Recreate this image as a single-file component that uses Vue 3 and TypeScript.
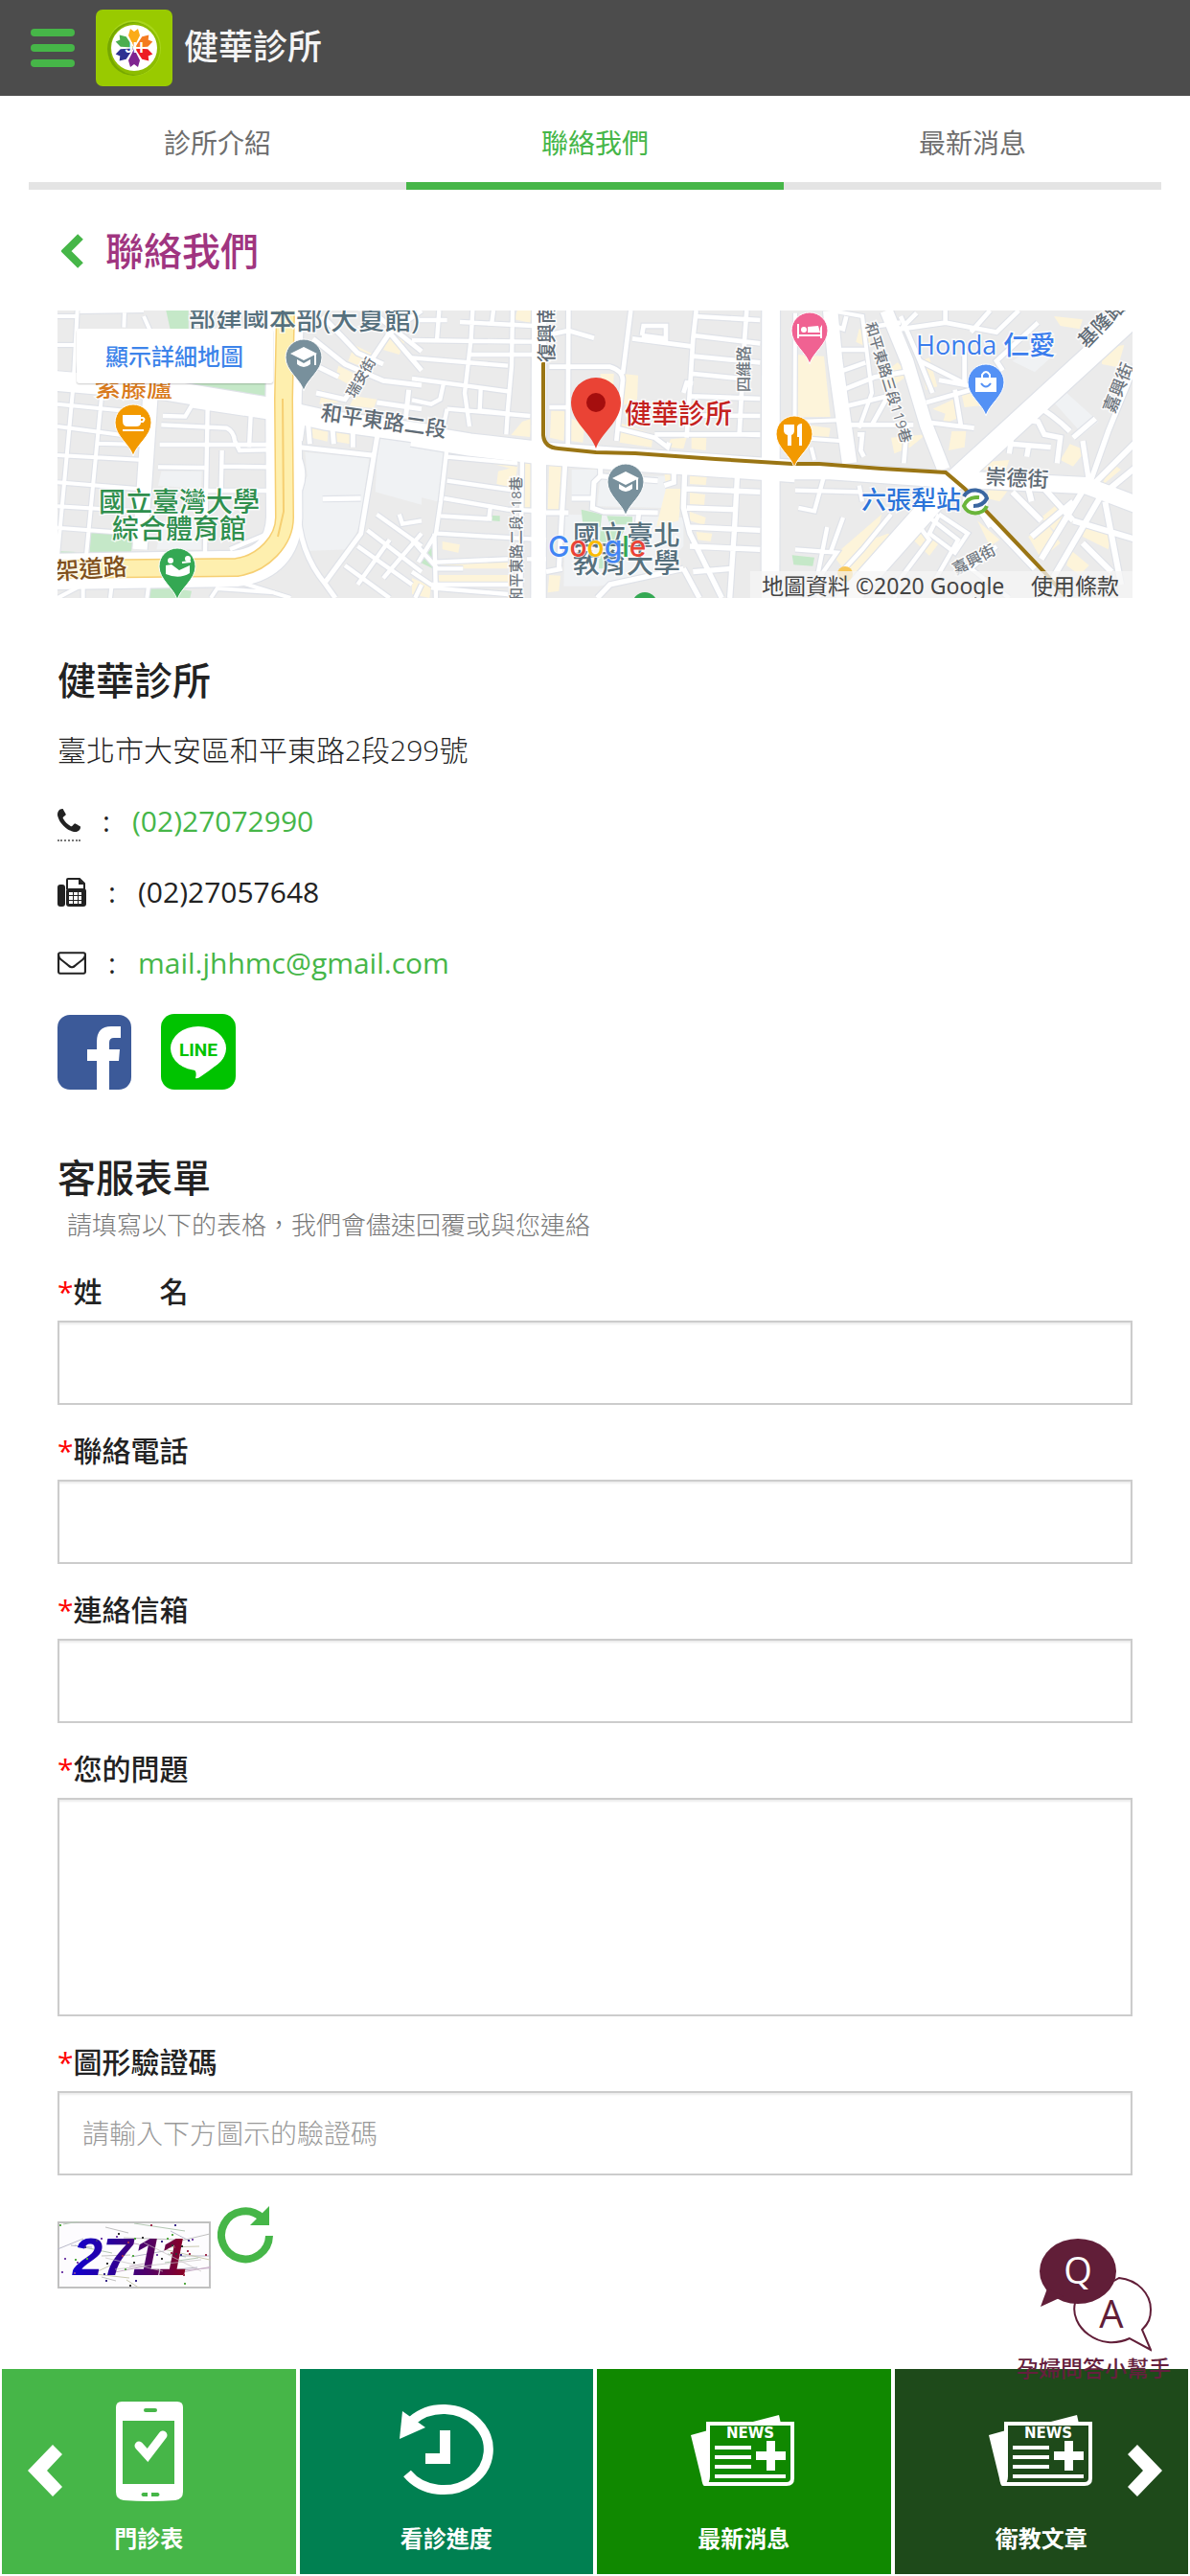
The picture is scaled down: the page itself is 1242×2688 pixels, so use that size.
<script setup lang="ts">
import { ref } from 'vue'

interface Road { d: string; w: number }
interface District { dx: number; roads: Road[]; cream: string[]; park: string[]; campus: string[] }
interface Pin { x: number; y: number; fill: string; kind: string }

const tabs = [
  { label: '診所介紹', active: false },
  { label: '聯絡我們', active: true },
  { label: '最新消息', active: false },
]

const tiles = [
  { label: '門診表', icon: 'phone', tone: 'light' },
  { label: '看診進度', icon: 'clock', tone: 'teal' },
  { label: '最新消息', icon: 'news', tone: 'green' },
  { label: '衛教文章', icon: 'news', tone: 'dark' },
]

const fields = ref([
  { id: 'name', label: '姓　　名', type: 'text', value: '' },
  { id: 'phone', label: '聯絡電話', type: 'tel', value: '' },
  { id: 'email', label: '連絡信箱', type: 'email', value: '' },
])
const question = ref('')
const captcha = ref('')

const petals = ['#fbab18', '#f47b20', '#ed1c24', '#7f2490', '#2e3192', '#4bae4f']

// Street network, three districts west to east; units are a third of a map pixel.
const districts: District[] = [
  {
    dx: -20,
    roads: [
      { d: 'M0 258L400 292L720 345L900 385L1240 432', w: 62 },
      { d: 'M352 290L318 790', w: 46 },
      { d: 'M0 860L620 850Q765 830 770 690L768 330L775 0', w: 112 },
      { d: 'M122 42L110 270L60 810M200 290L150 810M60 335L330 362M60 405L325 440M60 495L330 510M180 458L330 462M60 580L310 600M60 655L310 670M60 722L300 740', w: 12 },
      { d: 'M60 60L120 60M60 150L118 150M270 42L268 95M130 45L330 42M330 60L350 105', w: 12 },
      { d: 'M530 345L522 800M390 372L460 374L480 340L720 376M385 400L590 410Q612 420 615 450L630 480L716 478M380 462L716 462M375 532L520 534M665 370L660 470M575 480L572 600M575 530L716 532M530 606L716 606M600 790L720 740', w: 13 },
      { d: 'M820 470L1050 496M1062 430L1010 740L900 890M890 632L1010 630M815 500Q840 560 815 610Q800 780 900 900L930 942', w: 15 },
      { d: 'M860 130L960 210L1080 262L1200 276M890 60L1000 175L1080 210M1040 42L1200 170M1200 42L1100 112L960 320L870 300M1100 112L1200 230M870 215L940 250M1160 290L1150 380M830 380L820 450M845 400L850 460M920 400L925 460M985 400L985 470M1200 350L1060 330', w: 15 },
      { d: 'M1060 680L1200 780M1030 730L1200 860M1000 780L1170 900M960 840L1100 942M1200 740L1080 880M1130 680L1140 710L1200 700M1100 760L1000 900M1200 900L1180 942', w: 13 },
      { d: 'M60 905L340 890M60 942L140 900M140 900L140 942M230 900L225 942M345 905L340 942M490 900L640 895L790 942M540 942L560 912L740 925', w: 12 },
    ],
    cream: ['M990 150L1050 180L1030 225L970 200Z', 'M940 215L1010 250L1000 290L930 250Z', 'M1100 120L1150 130L1130 180L1080 165Z', 'M990 310L1060 320L1050 348L975 340Z', 'M850 402L908 408L905 452L855 440Z', 'M930 412L982 418L975 460L930 452Z', 'M820 395L835 400L832 438L820 436Z', 'M890 290L940 330L880 335Z'],
    park: ['M400 42L470 42L470 100L415 110Z', 'M430 260L715 270L712 320L560 290Z', 'M165 728L300 745L290 802L160 800Z', 'M340 900L480 920L475 942L345 942Z', 'M60 795L120 798L60 815Z'],
    campus: ['M835 485L1036 505L1005 715L975 790L835 795L815 610L842 560Z', 'M1065 435L1200 450L1200 650L1055 610Z', 'M385 545L512 545L510 600L375 590Z', 'M390 700L510 705L510 790L370 790Z'],
  },
  {
    dx: 370,
    roads: [
      { d: 'M0 432L180 462L420 490L700 510L960 528L1200 545', w: 70 },
      { d: 'M398 0L396 960', w: 46 },
      { d: 'M1124 0L1122 960', w: 56 },
      { d: 'M0 135L380 140M190 42L185 130L165 300L180 405M85 42L78 135M0 190L300 215M0 255L300 295M0 322L60 335L88 320L100 265M185 180L380 180M315 42L312 215L300 350L295 430M20 72L110 72M150 78L380 90M255 42L250 80M215 290L212 355L300 365M110 350L370 372M110 350L95 420', w: 13 },
      { d: 'M430 118L490 105L570 128M490 42L488 470M430 218L620 218Q660 230 660 260L640 450M430 345L490 345M685 42L660 240M690 130L880 155M720 120L725 90L795 90L795 130L720 120', w: 14 },
      { d: 'M890 42L880 130L870 290L860 440M885 60L1090 72M880 120L1090 145M880 185L1090 205M880 240L1030 255M870 310L1090 318M870 370L1090 372M760 430L1090 430M1048 42L1040 150L1025 430L1090 432M850 300L860 268L880 270M640 410L760 440L800 470L805 455', w: 14 },
      { d: 'M112 450L90 640L75 740L20 830M110 500L330 520M110 575L320 605M100 630L300 665L420 670M90 685L250 695M80 740L420 760M0 760L80 850L160 850M70 740L75 942M0 860L60 900L300 900M75 830L300 820M60 910L300 930M345 480L340 942M360 820L420 820M245 660L240 700', w: 13 },
      { d: 'M480 510L470 670L460 850M420 675L490 675M420 860L470 850M590 500L590 560L570 580L565 660L600 672L770 675M500 630L565 630M590 560L700 570L770 575M710 675L700 770M820 540L820 580L790 590', w: 15 },
      { d: 'M855 520L850 660L870 740L970 942M1020 530L1010 720L995 942M860 600L1090 610M860 660L1010 665M870 720L1090 730M870 780L1090 790M880 860L1000 850M580 942L620 900L850 850M850 850L900 942', w: 16 },
    ],
    cream: ['M330 42L378 42L370 80L320 70Z', 'M436 355L480 358L475 450L432 440Z', 'M590 240L632 240L630 300L590 270Z', 'M660 240L708 245L705 320L660 340Z', 'M500 380L540 400L535 455L495 450Z', 'M655 395L755 430L750 470L650 455Z', 'M875 437L922 440L920 480L875 475Z', 'M345 390L375 380L370 438L310 432Z', 'M230 485L330 500L320 540L230 515Z', 'M270 545L330 530L320 600L265 585Z', 'M430 512L470 515L460 665L425 670Z', 'M345 500L375 502L370 670L348 665Z', 'M95 765L150 775L145 800L95 790Z', 'M90 830L300 825L300 850L90 850Z', 'M80 870L320 870L320 905L90 905Z', 'M430 870L465 872L460 920L425 925Z', 'M870 540L925 545L920 588L870 585Z', 'M870 612L918 618L915 652L870 648Z', 'M870 672L920 690L915 715L870 700Z', 'M890 735L940 740L935 765L895 760Z', 'M745 530L815 535L810 580L795 590L790 550Z', 'M795 600L845 600L835 700L765 720Z', 'M0 880L60 905L55 942L0 930Z', 'M500 515L580 520L575 540L500 530Z', 'M810 445L860 440L850 475L800 470Z'],
    park: ['M530 665L595 680L590 720L535 710Z', 'M610 685L690 688L690 712L620 712Z', 'M25 830L65 780L65 850Z', 'M245 683L275 685L275 702L248 700Z', 'M590 720L670 720L600 850L585 850Z'],
    campus: ['M0 450L100 470L80 640L0 620Z', 'M500 540L585 540L570 640L500 640Z', 'M590 560L795 560L795 660L580 655Z', 'M480 680L850 690L850 780L760 880L580 905L475 905Z'],
  },
  {
    dx: 740,
    roads: [
      { d: 'M0 545L200 545L560 570L700 575L1000 590L1160 650', w: 52 },
      { d: 'M240 960L560 600L1160 50', w: 66 },
      { d: 'M200 42L215 200L260 520', w: 46 },
      { d: 'M375 42L440 200L500 400L555 540', w: 40 },
      { d: 'M90 50L88 500M90 390L230 385M90 440L230 450M140 470L150 510M200 42L300 60L330 300L290 410', w: 12 },
      { d: 'M210 90L240 100L250 60M210 165L310 165M225 235L310 205M240 290L340 250L460 230M235 345L380 310M260 400L460 400M285 430L300 430L295 480L305 500M440 400L430 520M380 310L330 400M350 90L420 80', w: 14 },
      { d: 'M420 60L480 200M480 200L620 270L620 160M470 50L420 100L560 80L560 42M560 80L720 110L790 42M640 110L700 42M500 330L640 290M490 390L570 400L650 410M590 290L610 410M520 300L480 200M850 80L720 200L740 230M540 260L650 280', w: 14 },
      { d: 'M830 330Q900 370 950 420M780 380L850 390L870 430L920 440L910 520M770 420L760 490M770 460L890 470M820 470L815 500M960 440L1030 380M1020 210L1030 170L1000 160M1010 580L990 450M1160 200L1070 420L1010 590', w: 16 },
      { d: 'M1000 590L860 820M1060 600L850 960M1160 450L1020 590M1160 530L1050 620M960 700L1160 760M990 770L1080 860M1060 640L1110 900M960 640L830 750M870 600L960 700M770 610L860 700M640 640L840 850M820 600L830 640', w: 18 },
      { d: 'M90 605L290 610M90 790L220 800L150 900M180 560L150 670L100 660M190 720L160 870L300 942M290 590L300 640M240 690L200 800M390 680L300 790L160 942M450 680L510 760L420 880L400 942M510 690L600 760L520 900M540 680L630 740L590 800L510 740L540 680M720 780L640 850L760 942M650 640L700 720', w: 13 },
    ],
    cream: ['M92 180L180 185L200 375L90 375Z', 'M140 402L200 410L195 440L130 435Z', 'M290 100L330 110L320 160L280 140Z', 'M350 250L410 205L450 240L380 290Z', 'M480 200L510 190L535 280L500 290Z', 'M520 350L585 320L595 380L550 400L560 365Z', 'M610 300L660 290L670 340L620 345Z', 'M580 420L625 420L620 470L570 480Z', 'M640 520L760 510L750 540L640 540Z', 'M900 60L990 70L980 100L920 90Z', 'M1050 160L1120 150L1100 220L1050 210Z', 'M1080 520L1110 540L1050 590Z', 'M950 460L1000 480L960 530L920 510Z', 'M380 740L440 760L250 880L220 800Z', 'M460 700L540 770L510 810L440 740Z', 'M660 700L730 760L700 780Z', 'M820 750L880 710L920 770L860 820Z', 'M860 690L920 640L960 680L910 740Z', 'M1000 710L1080 740L1070 790L990 750Z', 'M950 790L1010 840L980 870L940 840Z', 'M700 580L760 600L730 640L690 630Z', 'M390 440L500 430L450 470L400 490Z', 'M340 780L240 850L210 810L360 680Z'],
    park: ['M80 808L150 815L145 842L85 838Z'],
    campus: ['M900 330L940 300L1040 390L990 430Z', 'M770 200L830 160L890 190L840 235Z'],
  },
]

const pins: Pin[] = [
  { x: 257, y: 49, fill: '#78909c', kind: 'school' },
  { x: 79, y: 117, fill: '#f29900', kind: 'cup' },
  { x: 125, y: 267, fill: '#34a853', kind: 'hall' },
  { x: 593, y: 179, fill: '#78909c', kind: 'school' },
  { x: 769, y: 129, fill: '#f29900', kind: 'fork' },
  { x: 785, y: 21, fill: '#f06292', kind: 'bed' },
  { x: 969, y: 75, fill: '#5491f5', kind: 'bag' },
]

// Captcha noise from a small fixed-seed generator.
let seed = 11
const rand = (max: number): number => {
  seed = (seed * 16807) % 2147483647
  return Math.round((seed / 2147483647) * max)
}
const noiseColors = ['#b9b9c9', '#c9c9b0', '#c8b0c8', '#b4c8b4', '#c0c0c0']
const noiseLines = Array.from({ length: 26 }, (_, i) => {
  const x = rand(130)
  const y = rand(66)
  return { x1: x, y1: y, x2: x + 15 + rand(40), y2: y + rand(24) - 12, c: noiseColors[i % 5] }
})
const dotColors = ['#3a2a8a', '#333', '#a03050', '#5a4', '#74a']
const noiseDots = Array.from({ length: 44 }, (_, i) => ({ x: 2 + rand(154), y: 2 + rand(64), c: dotColors[i % 5] }))
</script>

<template>
  <div class="page" lang="zh-Hant">
    <header class="topbar">
      <button class="menu" type="button" aria-label="選單"><i></i><i></i><i></i></button>
      <a class="brand" href="#">
        <svg class="logo" viewBox="0 0 80 80" aria-hidden="true">
          <rect width="80" height="80" rx="7" fill="#99ca00" />
          <ellipse cx="40" cy="40" rx="28" ry="29" fill="#a9d61c" />
          <ellipse cx="39" cy="41" rx="27" ry="28" fill="#76a800" />
          <ellipse cx="41" cy="41" rx="26" ry="27" fill="#8dbd00" />
          <circle cx="40" cy="40" r="24" fill="#fff" />
          <path v-for="(c, i) in petals" :key="c" :fill="c" :transform="`rotate(${i * 60} 40 40)`" d="M40 39L36 31L34 27L36 20L40 23L44 20L46 27L44 31Z" />
          <text x="40" y="45" text-anchor="middle" font-size="15" font-weight="700" fill="#fff" font-family="Roboto, sans-serif">JH</text>
        </svg>
        <span>健華診所</span>
      </a>
    </header>

    <nav class="tabs">
      <a v-for="t in tabs" :key="t.label" href="#" :class="{ active: t.active }">{{ t.label }}</a>
    </nav>

    <main>
      <h1>
        <a href="#" aria-label="返回">
          <svg width="24" height="36" viewBox="0 0 24 36"><path d="M20 3L5 18L20 33" fill="none" stroke="#46b648" stroke-width="8" /></svg>
        </a>
        聯絡我們
      </h1>

      <svg class="map" viewBox="0 0 1122 300" preserveAspectRatio="xMidYMid slice" role="img" aria-label="地圖">
        <rect width="1122" height="300" fill="#ebebeb" />
        <g v-for="z in districts" :key="'a' + z.dx" :transform="`translate(${z.dx} -14) scale(.33333)`">
          <path v-for="p in z.campus" :key="p" :d="p" fill="#f0f2f4" />
          <path v-for="p in z.cream" :key="p" :d="p" fill="#fdf4da" />
          <path v-for="p in z.park" :key="p" :d="p" fill="#c5e8c8" />
        </g>
        <g v-for="z in districts" :key="'b' + z.dx" :transform="`translate(${z.dx} -14) scale(.33333)`" fill="none" stroke="#dfe2e8">
          <path v-for="r in z.roads" :key="r.d" :d="r.d" :stroke-width="r.w + 7" />
        </g>
        <g v-for="z in districts" :key="'c' + z.dx" :transform="`translate(${z.dx} -14) scale(.33333)`" fill="none" stroke="#fff">
          <path v-for="r in z.roads" :key="r.d" :d="r.d" :stroke-width="r.w" />
        </g>
        <g fill="none">
          <path d="M0 270L187 268C215 264 237 240 237 216L236 92L238 0" stroke="#f6cf72" stroke-width="20" />
          <path d="M0 270L187 268C215 264 237 240 237 216L236 92L238 0" stroke="#feefae" stroke-width="17" />
          <path d="M235 92L236 210L230 236" stroke="#f6cf72" stroke-width="2" />
          <path d="M507 54V130Q508 143 523 144L562 148L603 149L687 155L767 160L795 160L860 165L927 169L947 186L990 231L1030 273L1050 296" stroke="#9a7514" stroke-width="4" />
        </g>

        <g class="halo">
          <text x="137" y="20" font-size="28" fill="#56707d">部建國本部(大夏館)</text>
          <text x="39" y="90" font-size="27" fill="#d97a1c">紫藤廬</text>
          <text x="43" y="210" font-size="28" fill="#2f8f4e">國立臺灣大學</text>
          <text x="57" y="238" font-size="28" fill="#2f8f4e">綜合體育館</text>
          <text transform="translate(-2 281) rotate(-4)" font-size="25" fill="#80501c">架道路</text>
          <text transform="translate(274 114) rotate(8)" font-size="22" fill="#5f6b75">和平東路二段</text>
          <text transform="translate(310 92) rotate(-60)" font-size="15" fill="#707780">瑞安街</text>
          <text transform="translate(518 54) rotate(-90)" font-size="20" fill="#5f6b75">復興南路</text>
          <text transform="translate(722 85) rotate(-90)" font-size="16" fill="#707780">四維路</text>
          <text transform="translate(484 304) rotate(-90)" font-size="15" fill="#707780">和平東路二段118巷</text>
          <text transform="translate(843 14) rotate(73)" font-size="15" fill="#707780">和平東路三段119巷</text>
          <text x="592" y="118" font-size="28" fill="#c5221f">健華診所</text>
          <text x="538" y="245" font-size="28" fill="#56707d">國立臺北</text>
          <text x="538" y="274" font-size="28" fill="#56707d">教育大學</text>
          <text x="896" y="46" font-size="27" fill="#3b7ded">Honda 仁愛</text>
          <text x="839" y="207" font-size="26" fill="#2a73d9">六張犁站</text>
          <text transform="translate(968 181) rotate(3)" font-size="22" fill="#5f6b75">崇德街</text>
          <text transform="translate(938 276) rotate(-28)" font-size="16" fill="#707780">嘉興街</text>
          <text transform="translate(1103 108) rotate(-68)" font-size="18" fill="#707780">嘉興街</text>
          <text transform="translate(1074 40) rotate(-46)" font-size="20" fill="#5f6b75">基隆路</text>
        </g>

        <circle cx="613" cy="307" r="13" fill="#34a853" />
        <circle cx="822" cy="275" r="8" fill="#f8c85a" />
        <g v-for="p in pins" :key="p.x" :transform="`translate(${p.x} ${p.y})`">
          <path d="M0 35C-3 23 -19 14 -19 0A19 19 0 1 1 19 0C19 14 3 23 0 35Z" :fill="p.fill" stroke="#fff" stroke-width="1" />
          <g v-if="p.kind === 'school'" fill="#fff">
            <path d="M0 -11L14 -4L0 3L-14 -4Z" /><path d="M-7 2L0 6L7 2V7Q0 13 -7 7Z" /><path d="M11 -4H13V8H11Z" />
          </g>
          <g v-else-if="p.kind === 'cup'" fill="#fff">
            <path d="M-11 -8H8V0Q8 4 3 4H-6Q-11 4 -11 -2Z" /><path d="M7 -5H10Q13 -4 10 -1H7" fill="none" stroke="#fff" stroke-width="2" /><path d="M-11 7H11V9H-11Z" />
          </g>
          <g v-else-if="p.kind === 'hall'" fill="#fff">
            <circle cx="-7" cy="-6" r="3" /><circle cx="11" cy="-8" r="3" /><path d="M-12 -1L-6 -2L2 4L13 -1V7Q2 14 -12 8Z" /><path d="M5 -4L14 -5" stroke="#fff" stroke-width="2" />
          </g>
          <g v-else-if="p.kind === 'fork'" fill="#fff">
            <path d="M-11 -10H0V-4Q0 0 -3 1V12H-7V1Q-11 0 -11 -4Z" /><path d="M3 -8Q4 -11 8 -11V12H5V3H3Z" />
          </g>
          <g v-else-if="p.kind === 'bed'" fill="#fff">
            <path d="M-13 -7H-11V4H11V-3L13 -6V8H11V6H-11V8H-13Z" /><circle cx="-6" cy="-1" r="3" /><path d="M-2 -4L9 -5L11 2H-2Z" />
          </g>
          <g v-else>
            <path d="M-11 -5H11V10H-11Z" fill="#fff" /><path d="M-4 -5V-8Q0 -14 4 -8V-5" fill="none" stroke="#fff" stroke-width="2" /><path d="M-5 1Q0 8 5 1" fill="none" stroke="#5491f5" stroke-width="2" />
          </g>
        </g>
        <path d="M562 144C557 128 536 116 536 96A26 26 0 1 1 588 96C588 116 567 128 562 144Z" fill="#ea4335" />
        <circle cx="562" cy="96" r="10" fill="#a50e0e" />

        <circle cx="958" cy="199" r="13" fill="#fff" />
        <g fill="none" stroke-width="4">
          <path d="M946 194A13 12 0 0 1 970 196Q966 204 956 204" stroke="#3a66a0" />
          <path d="M970 204A13 12 0 0 1 946 204Q950 194 962 195" stroke="#6ab53a" />
        </g>

        <text x="512" y="257" font-size="30" font-weight="500" font-family="Inter, sans-serif" class="glogo"><tspan fill="#4285f4">G</tspan><tspan fill="#ea4335">o</tspan><tspan fill="#fbbc05">o</tspan><tspan fill="#4285f4">g</tspan><tspan fill="#34a853">l</tspan><tspan fill="#ea4335">e</tspan></text>

        <rect x="19" y="20" width="207" height="58" rx="4" fill="#000" fill-opacity=".05" />
        <rect x="20" y="20" width="205" height="57" rx="3" fill="#000" fill-opacity=".1" />
        <rect x="20" y="19" width="205" height="57" rx="3" fill="#fff" />
        <a href="#"><text x="50" y="57" font-size="24" fill="#3d84ea">顯示詳細地圖</text></a>

        <rect x="723" y="272" width="399" height="28" fill="#f5f5f5" fill-opacity=".75" />
        <g font-size="23" fill="#444" class="credit">
          <text x="735" y="296">地圖資料 ©2020 Google</text>
          <text x="1016" y="296">使用條款</text>
        </g>
      </svg>

      <h2>健華診所</h2>
      <address>
        <p>臺北市大安區和平東路2段299號</p>
        <p>
          <abbr title="電話"><svg width="24" height="24" viewBox="0 0 1408 1408"><path fill="#222" d="M1408 1112q0 27-10 70.5t-20.5 68.5q-21 50-122 106-94 51-186 51-27 0-53-3.5t-57.5-12.5-47-14.5-55.5-20.5-49-18q-98-35-175-83-127-79-264-216t-216-264q-48-77-83-175-3-9-18-49t-20.5-55.5-14.5-47-12.5-57.5-3.5-53q0-92 51-186 56-101 106-122 25-10 68.5-20.5t70.5-10.5q14 0 21 3 18 6 53 76 11 19 30 54t35 63.5 31 53.5q3 4 17.5 25t21.5 35.5 7 28.5q0 20-28.5 50t-62 55-62 53-28.5 46q0 9 5 22.5t8.5 20.5 14 24 11.5 19q76 137 174 235t235 174q2 1 19 11.5t24 14 20.5 8.5 22.5 5q18 0 46-28.5t53-62 55-62 50-28.5q14 0 28.5 7t35.5 21.5 25 17.5q25 15 53.5 31t63.5 35 54 30q70 35 76 53 3 7 3 21z" /></svg></abbr>
          <span class="colon">:</span>
          <a href="tel:0227072990">(02)27072990</a>
        </p>
        <p>
          <svg width="30" height="30" viewBox="0 0 30 30">
            <rect x="0" y="7" width="8" height="23" rx="3" fill="#222" />
            <path d="M10 12V2Q10 1 11 1H23L28 6V12" fill="#fff" stroke="#222" stroke-width="2" />
            <path d="M22 1V7H28Z" fill="#222" />
            <rect x="9" y="11" width="21" height="19" rx="3" fill="#222" />
            <path d="M12 15h4v3h-4zM17 15h4v3h-4zM22 15h3v3h-3zM12 19h4v4h-4zM17 19h4v4h-4zM22 19h3v4h-3zM12 24h4v3h-4zM17 24h4v3h-4zM22 24h3v3h-3z" fill="#fff" />
          </svg>
          <span class="colon">:</span>
          <span class="value">(02)27057648</span>
        </p>
        <p>
          <svg width="30" height="24" viewBox="0 256 1792 1408"><path fill="#222" d="M1664 1504v-768q-32 36-69 66-268 206-426 338-51 43-83 67t-86.5 48.5-102.5 24.5h-2q-48 0-102.5-24.5t-86.5-48.5-83-67q-158-132-426-338-37-30-69-66v768q0 13 9.5 22.5t22.5 9.5h1472q13 0 22.5-9.5t9.5-22.5zm0-1051v-24.5l-.5-13-3-12.5-5.5-9-9-7.5-14-2.5h-1472q-13 0-22.5 9.5t-9.5 22.5q0 168 147 284 193 152 401 317 6 5 35 29.5t46 37.5 44.5 31.5 50.5 27.5 43 9h2q20 0 43-9t50.5-27.5 44.5-31.5 46-37.5 35-29.5q208-165 401-317 54-43 100.5-115.5t46.5-131.5zm128-37v1088q0 66-47 113t-113 47h-1472q-66 0-113-47t-47-113v-1088q0-66 47-113t113-47h1472q66 0 113 47t47 113z" /></svg>
          <span class="colon">:</span>
          <a href="mailto:mail.jhhmc@gmail.com">mail.jhhmc@gmail.com</a>
        </p>
      </address>

      <div class="social">
        <a href="#" aria-label="Facebook">
          <svg width="78" height="79" viewBox="0 0 78 79">
            <rect y="1" width="77" height="78" rx="13" fill="#3c5a99" />
            <path d="M41 79V49H31V37H41V29Q41 13 56 13H66V25H59Q54 25 54 30V37H65L64 49H54V79Z" fill="#fff" />
          </svg>
        </a>
        <a href="#" aria-label="LINE">
          <svg width="78" height="79" viewBox="0 0 78 79">
            <rect width="78" height="79" rx="14" fill="#00c300" />
            <ellipse cx="39" cy="36" rx="29" ry="23" fill="#fff" />
            <path d="M34 58Q38 60 36 67Q38 68 42 65Q60 53 65 46L50 50Z" fill="#fff" />
            <text x="39" y="44" text-anchor="middle" font-size="19" font-weight="700" fill="#00c300" font-family="Roboto, sans-serif">LINE</text>
          </svg>
        </a>
      </div>

      <h2>客服表單</h2>
      <p class="hint">請填寫以下的表格，我們會儘速回覆或與您連絡</p>

      <form @submit.prevent>
        <div v-for="f in fields" :key="f.id" class="field">
          <label :for="f.id"><b>*</b>{{ f.label }}</label>
          <input :id="f.id" v-model="f.value" :type="f.type" />
        </div>
        <div class="field">
          <label for="question"><b>*</b>您的問題</label>
          <textarea id="question" v-model="question"></textarea>
        </div>
        <div class="field">
          <label for="captcha"><b>*</b>圖形驗證碼</label>
          <input id="captcha" v-model="captcha" type="text" placeholder="請輸入下方圖示的驗證碼" />
        </div>
        <div class="verify">
          <svg class="code" width="160" height="70" viewBox="0 0 160 70">
            <defs>
              <linearGradient id="ink" gradientUnits="userSpaceOnUse" x1="14" y1="0" x2="135" y2="0">
                <stop offset="0" stop-color="#1200d0" /><stop offset=".35" stop-color="#2a009c" /><stop offset=".7" stop-color="#560060" /><stop offset="1" stop-color="#8e0020" />
              </linearGradient>
            </defs>
            <rect x="1" y="1" width="158" height="68" fill="#fdfcfe" stroke="#c0c0c0" stroke-width="2" />
            <line v-for="(l, i) in noiseLines" :key="'l' + i" :x1="l.x1" :y1="l.y1" :x2="l.x2" :y2="l.y2" :stroke="l.c" stroke-width="1" />
            <text x="16" y="56" font-size="56" font-weight="700" font-style="italic" fill="url(#ink)" font-family="Liberation Sans, sans-serif">2711</text>
            <rect v-for="(d, i) in noiseDots" :key="'d' + i" :x="d.x" :y="d.y" width="2" height="2" :fill="d.c" />
            <path d="M60 50L150 40M50 38L110 52M90 22L150 52" stroke="#c4bfc0" fill="none" stroke-opacity=".7" />
          </svg>
          <button class="refresh" type="button" aria-label="重新產生驗證碼">
            <svg width="60" height="60" viewBox="0 0 60 60">
              <path d="M54 31A25 25 0 1 1 46 12" fill="none" stroke="#46b648" stroke-width="8" />
              <path d="M54 0V20H34Z" fill="#46b648" />
            </svg>
          </button>
        </div>
      </form>
    </main>

    <footer>
      <a v-for="t in tiles" :key="t.label" href="#" :class="['tile', t.tone]">
        <svg width="120" height="120" viewBox="0 0 120 120" aria-hidden="true">
          <g v-if="t.icon === 'phone'">
            <path d="M32 8H90Q96 8 96 14V102Q96 110 88 111Q61 113 34 111Q26 110 26 102V14Q26 8 32 8Z" fill="#fff" />
            <path d="M33 28H87V94H33Z" fill="#46b648" />
            <rect x="55" y="15" width="14" height="4" rx="2" fill="#46b648" />
            <path d="M54 103H59V107H54Q51 105 54 103ZM63 103H70Q73 105 70 107H63Z" fill="#46b648" />
            <path d="M50 54L59 64L75 43" fill="none" stroke="#fff" stroke-width="9" stroke-linecap="round" stroke-linejoin="miter" />
          </g>
          <g v-else-if="t.icon === 'clock'">
            <path d="M19 83A47 42 0 1 0 24 28" fill="none" stroke="#fff" stroke-width="10" />
            <path d="M14 18L11 47L38 35Z" fill="#fff" />
            <path d="M53 38H64V73H38V62H53Z" fill="#fff" />
          </g>
          <g v-else fill="#fff">
            <path d="M66 30L97 22L99 31Z" />
            <path d="M5 43L23 38V80Q23 96 19 96Q17 95 16 88Z" />
            <path d="M23 31H111V88Q111 94 105 94H19Q23 92 23 86Z" fill="none" stroke="#fff" stroke-width="4" />
            <text x="67" y="46" text-anchor="middle" font-size="15" font-weight="700" font-family="DejaVu Sans, sans-serif">NEWS</text>
            <path d="M30 54H68V58H30ZM30 64H68V68H30ZM30 74H68V78H30ZM30 84H104V88H30Z" />
            <path d="M84 49H93V60H104V69H93V80H84V69H73V60H84Z" />
          </g>
        </svg>
        <span>{{ t.label }}</span>
      </a>
      <button class="arrow prev" type="button" aria-label="上一個"><svg width="36" height="54" viewBox="0 0 36 54"><path d="M26 0L36 10L20 27L36 44L26 54L0 27Z" fill="#fff" /></svg></button>
      <button class="arrow next" type="button" aria-label="下一個"><svg width="36" height="54" viewBox="0 0 36 54"><path d="M10 0L0 10L16 27L0 44L10 54L36 27Z" fill="#fff" /></svg></button>
      <a class="helper" href="#">
        <svg width="120" height="120" viewBox="0 -22 120 120" aria-hidden="true">
          <path d="M86 21C105 23 119 37 119 54C119 63 117 68 110 75L119 96L97 84C82 91 66 89 54 80C43 72 37 59 40 47Z" fill="#fff" stroke="#611e38" stroke-width="2" />
          <ellipse cx="43" cy="14" rx="40" ry="34" fill="#611e38" />
          <path d="M11 32L4 51L28 40Z" fill="#611e38" />
          <text x="43" y="27" text-anchor="middle" font-size="38" font-weight="500" fill="#fff">Q</text>
          <text x="78" y="73" text-anchor="middle" font-size="40" font-weight="500" fill="#611e38">A</text>
        </svg>
        <span>孕婦問答小幫手</span>
      </a>
    </footer>
  </div>
</template>

<style>
body {
  margin: 0;
  background: #fff;
}
</style>

<style scoped>
.page {
  display: flex;
  flex-direction: column;
  min-height: 100vh;
  font-family: "Open Sans", "Noto Sans CJK TC", sans-serif;
  font-size: 30px;
  color: #222;
}
* {
  box-sizing: border-box;
}
a {
  color: #46b648;
  text-decoration: none;
}
button {
  padding: 0;
  border: 0;
  background: none;
  cursor: pointer;
}
svg {
  display: block;
  flex: none;
}
.topbar {
  display: flex;
  align-items: center;
  gap: 22px;
  height: 100px;
  padding: 0 32px;
  background: #4c4c4c;
}
.menu {
  display: flex;
  flex-direction: column;
  gap: 8px;
  width: 46px;
}
.menu i {
  height: 8px;
  border-radius: 4px;
  background: #46b648;
}
.brand {
  display: flex;
  align-items: center;
  gap: 12px;
  font-size: 36px;
  font-weight: 500;
  line-height: 40px;
  color: #f4f4f4;
}
.brand span {
  padding-bottom: 2px;
}
.logo {
  width: 80px;
  height: 80px;
}
.tabs {
  display: flex;
  padding: 0 30px;
}
.tabs a {
  flex: 1;
  padding-top: 8px;
  border-bottom: 8px solid #e4e4e4;
  font-size: 28px;
  line-height: 82px;
  text-align: center;
  color: #6e6e6e;
}
.tabs a.active {
  border-color: #46b648;
  color: #46b648;
}
main {
  flex: 1;
  padding: 34px 60px 84px;
}
h1 {
  display: flex;
  align-items: center;
  gap: 22px;
  margin: 0 0 32px;
  padding-left: 4px;
  font-size: 40px;
  font-weight: 500;
  line-height: 60px;
  color: #a03580;
}
.map {
  width: 100%;
  height: 300px;
  font-family: "Open Sans", "Noto Sans CJK TC", sans-serif;
  font-weight: 500;
}
.halo text {
  paint-order: stroke;
  stroke: #fff;
  stroke-opacity: .75;
  stroke-width: 3px;
}
.glogo {
  paint-order: stroke;
  stroke: #fff;
  stroke-width: 2px;
  stroke-opacity: .7;
}
.credit {
  font-family: "Noto Sans", "Noto Sans CJK TC", sans-serif;
  font-weight: 400;
}
h2 {
  margin: 56px 0 0;
  font-size: 40px;
  font-weight: 500;
  line-height: 60px;
}
address {
  margin-top: 6px;
  font-style: normal;
  font-weight: 300;
  line-height: 74px;
}
address p {
  display: flex;
  align-items: center;
  gap: 12px;
  height: 74px;
  margin: 0;
}
address a,
.value {
  font-weight: 400;
}
.colon {
  width: 30px;
  font-weight: 400;
  text-align: center;
}
abbr {
  padding: 8px 0;
  border-bottom: 2px dotted #777;
  text-decoration: none;
}
.social {
  display: flex;
  gap: 30px;
  margin: 16px 0 62px;
}
.social + h2 {
  margin-top: 0;
}
.hint {
  margin: 0 0 29px 10px;
  font-size: 26px;
  font-weight: 300;
  line-height: 38px;
  color: #777;
}
form {
  display: flex;
  flex-direction: column;
  gap: 26px;
}
.field {
  display: flex;
  flex-direction: column;
  gap: 8px;
}
label {
  height: 44px;
  font-weight: 500;
  line-height: 44px;
}
label b {
  font-weight: 400;
  color: #f00;
}
input,
textarea {
  display: block;
  width: 100%;
  height: 88px;
  margin: 0;
  padding: 0 24px;
  border: 2px solid #ccc;
  border-radius: 0;
  background: #fff;
  box-shadow: inset 0 2px 2px rgba(0, 0, 0, .08);
  font: 300 28px "Open Sans", "Noto Sans CJK TC", sans-serif;
  color: #222;
}
textarea {
  height: 228px;
  padding: 20px 24px;
  resize: none;
}
input::placeholder {
  color: #999;
  opacity: 1;
}
.verify {
  display: flex;
  align-items: flex-start;
  gap: 7px;
  padding-top: 6px;
}
.code {
  margin-top: 16px;
}
footer {
  position: relative;
  display: grid;
  grid-template-columns: repeat(4, 1fr);
  gap: 4px;
  padding: 0 2px 2px;
}
.tile {
  display: flex;
  flex-direction: column;
  align-items: center;
  gap: 12px;
  padding: 26px 0 18px;
  font-size: 24px;
  font-weight: 700;
  line-height: 38px;
  color: #fff;
}
.light { background: #46b648; }
.teal { background: #008051; }
.green { background: #108800; }
.dark { background: #1e4a1a; }
.arrow {
  position: absolute;
  top: 79px;
}
.prev { left: 29px; }
.next { right: 29px; }
.helper {
  position: absolute;
  right: 20px;
  bottom: 200px;
  display: flex;
  flex-direction: column;
  align-items: center;
  font-size: 23px;
  font-weight: 500;
  line-height: 34px;
  color: #651f3e;
}
</style>
